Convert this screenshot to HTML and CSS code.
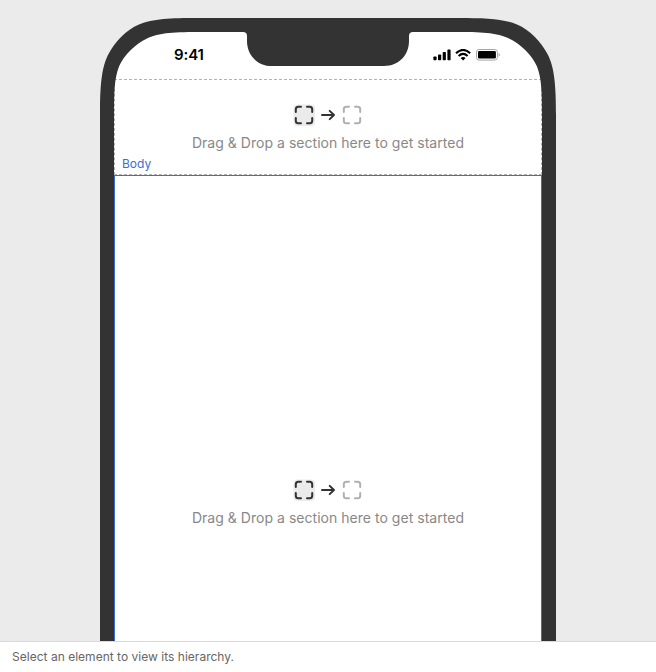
FILE: index.html
```html
<!DOCTYPE html>
<html lang="en">
<head>
<meta charset="utf-8">
<title>Canvas</title>
<link rel="stylesheet" href="styles.css">
</head>
<body>
<svg width="0" height="0" class="defs" aria-hidden="true">
  <symbol id="box" viewBox="0 0 24 24"><path d="M3.800 9V6.300Q3.800 3.800 6.300 3.800H9M15 3.800h2.700q2.500 0 2.500 2.500V9M20.200 15v2.700q0 2.500-2.500 2.500H15M9 20.200H6.300q-2.500 0-2.500-2.500V15" fill="none" stroke="currentColor" stroke-width="2" stroke-linecap="round"/></symbol>
  <symbol id="arrow" viewBox="0 0 16 16"><path d="M2 8h12M9.700 3.900L14 8l-4.300 4.100" fill="none" stroke="currentColor" stroke-width="2" stroke-linecap="round" stroke-linejoin="round"/></symbol>
</svg>
<div class="app">
  <main class="canvas">
    <div class="phone">
      <svg class="shell" viewBox="0 0 456 623" width="456" height="623" aria-hidden="true">
        <path fill="#fff" d="M13 623V97C13 72 14 57 19.500 45C25 35 35 25 47 19C58 14 70 13 98 13H358C386 13 398 14 409 19C421 25 431 35 436.500 45C442 57 443 72 443 97V623Z"/>
      </svg>
      <div class="status">
        <span class="time">9:41</span>
        <svg class="signals" width="68" height="12" viewBox="0 0 68 12" aria-hidden="true">
          <rect x=".4" y="7.500" width="3.200" height="3.700" rx=".8"/><rect x="5" y="5.500" width="3.200" height="5.700" rx=".8"/><rect x="9.700" y="3" width="3.200" height="8.200" rx=".8"/><rect x="14.400" y=".6" width="3.200" height="10.600" rx=".8"/>
          <g fill="none" stroke="#000" stroke-width="2"><path d="M23 4.300Q30.100 -2.500 37.200 4.300"/><path d="M25.600 7Q30.100 2.800 34.600 7"/></g>
          <path d="M27.600 8.900Q30.100 6.900 32.600 8.900L30.100 11.400Z"/>
          <rect x="43.500" y=".5" width="20.900" height="10.600" rx="2.600" fill="none" stroke="#a6a6a6"/><rect x="45" y="2" width="17.900" height="7.600" rx="1.300"/><path d="M65.600 4v3.700q1.300-.6 1.300-1.850T65.600 4" fill="#999"/>
        </svg>
      </div>
      <section class="slot header">
        <div class="drop"><svg class="tile dark"><rect x="1.500" y="1.500" width="21.500" height="21.500" rx="4" fill="#ebebeb"/><use href="#box"/></svg><svg class="arrow"><use href="#arrow"/></svg><svg class="tile"><use href="#box"/></svg></div>
        <p>Drag &amp; Drop a section here to get started</p>
        <span class="label">Body</span>
      </section>
      <section class="slot body">
        <div class="drop"><svg class="tile dark"><rect x="1.500" y="1.500" width="21.500" height="21.500" rx="4" fill="#ebebeb"/><use href="#box"/></svg><svg class="arrow"><use href="#arrow"/></svg><svg class="tile"><use href="#box"/></svg></div>
        <p>Drag &amp; Drop a section here to get started</p>
      </section>
      <svg class="shell bezel" viewBox="0 0 456 623" width="456" height="623" aria-hidden="true">
        <path fill="#333" fill-rule="evenodd" d="M0 623V97C0 68 1.500 49 8.500 36C15 24 26 12 39 6.500C53 .8 70 0 98 0H358C386 0 403 .8 417 6.500C430 12 441 24 447.500 36C454.500 49 456 68 456 97V623ZM14 623V97C14 74 14.500 60 19 48.500C24 37 35.500 26 47 20.500C58 15.300 70 14 98 14H143Q147 14 147 18V23C147 37 157 48 172 48H284C299 48 309 37 309 23V18Q309 14 313 14H358C386 14 398 15.300 409 20.500C420.500 26 432 37 437 48.500C441.500 60 442 74 442 97V623Z"/>
      </svg>
    </div>
  </main>
  <footer class="hierarchy">Select an element to view its hierarchy.</footer>
</div>
</body>
</html>
```

FILE: styles.css
```css
* { box-sizing: border-box; }
body { margin: 0; font-family: Inter, sans-serif; }
.defs { position: absolute; }
.app { display: flex; flex-direction: column; width: 656px; height: 672px; overflow: hidden; }
.canvas { flex: 1; min-height: 0; padding-top: 18px; background: #ebebeb; overflow: hidden; }
.phone { position: relative; width: 456px; height: 623px; margin: 0 auto; padding: 14px 14px 0; }
.shell { position: absolute; inset: 0; }
.bezel { z-index: 1; pointer-events: none; }
.status { position: relative; height: 47px; display: flex; justify-content: space-between; padding: 14px 41px 0 60px; }
.time { font-size: 15px; line-height: 18px; font-weight: 600; letter-spacing: -.1px; }
.signals { margin-top: 3px; }
.slot { position: relative; display: flex; flex-direction: column; align-items: center; }
.header { height: 96px; padding-top: 23px; border: 1px dashed #b3b3b3; }
.body { height: 700px; padding-top: 302px; border: 1px solid #3b6fd4; }
.drop { display: flex; align-items: center; gap: 4px; height: 24px; color: #333; }
.tile { width: 24px; height: 24px; color: #b0b0b0; }
.dark { color: #333; }
.arrow { width: 16px; height: 16px; }
.slot p { margin: 6px 0 0; font-size: 14px; line-height: 20px; letter-spacing: .03px; color: #888; white-space: nowrap; }
.label { position: absolute; left: 7px; top: 76px; font-size: 12px; line-height: 16px; color: #3b6fd4; }
.hierarchy { height: 31px; border-top: 1px solid #d9d9d9; padding: 7px 12px 0; font-size: 12px; line-height: 16px; letter-spacing: .02px; color: #666; background: #fff; }
```
